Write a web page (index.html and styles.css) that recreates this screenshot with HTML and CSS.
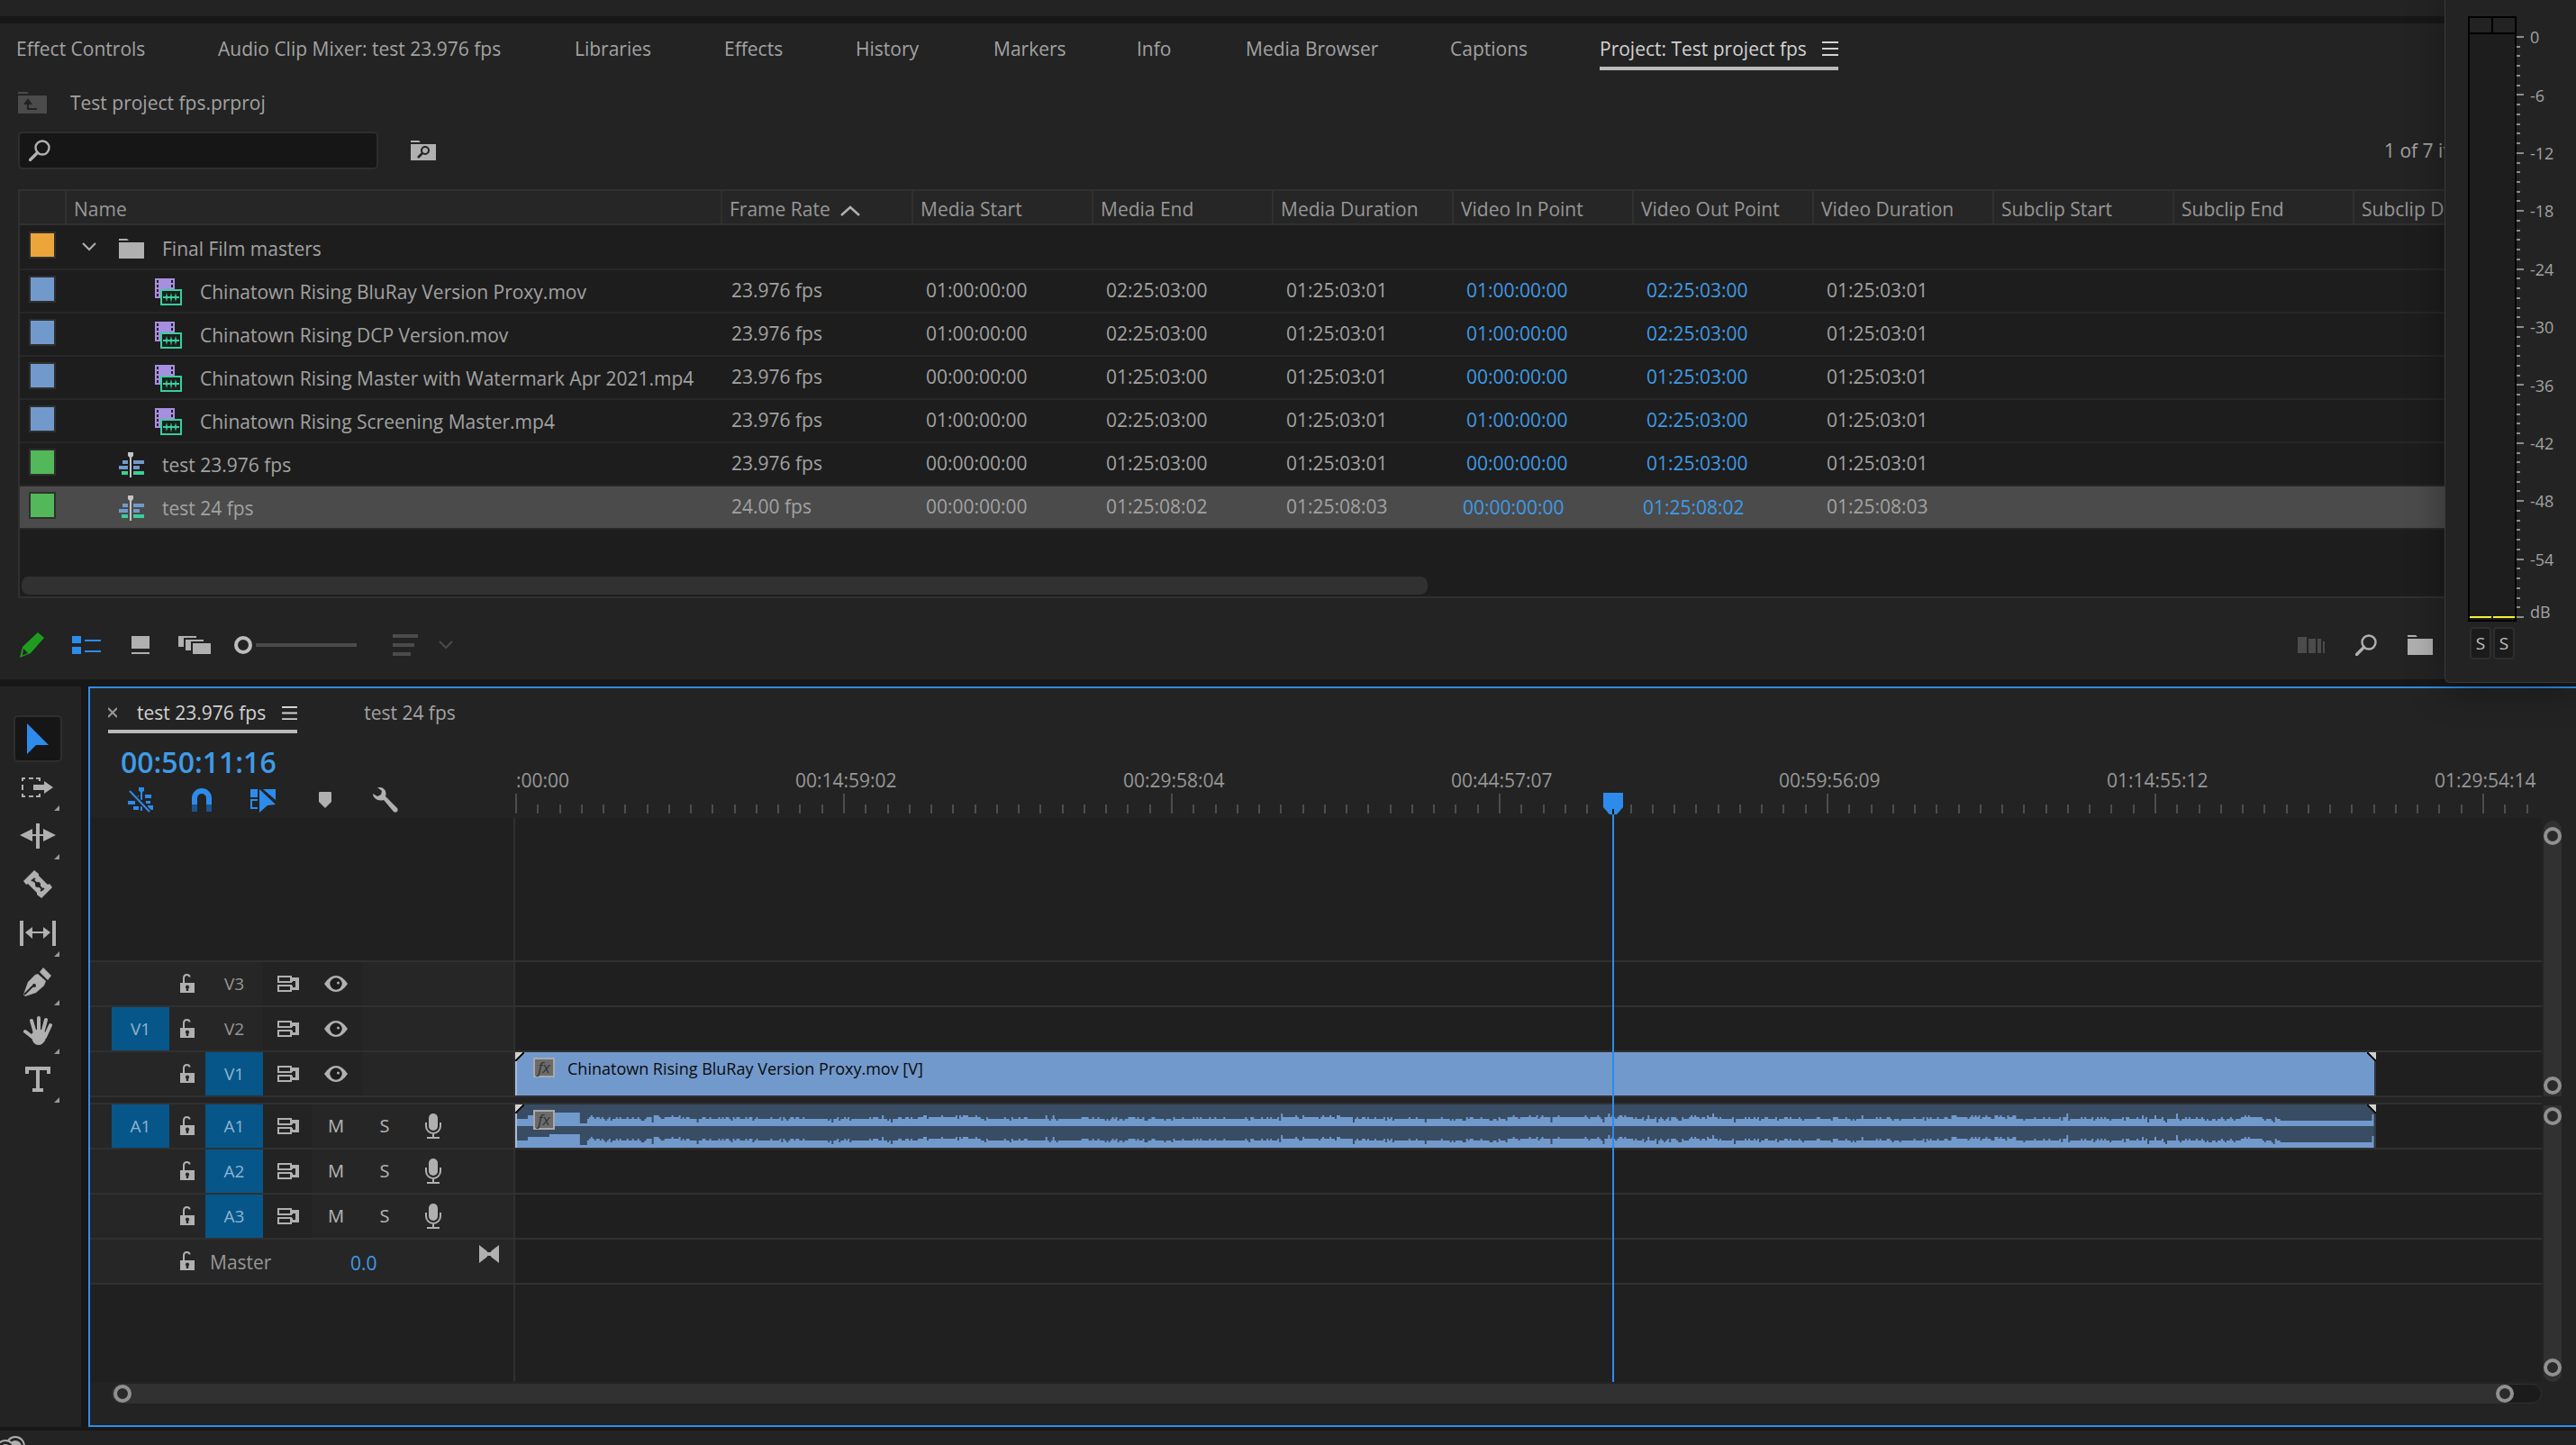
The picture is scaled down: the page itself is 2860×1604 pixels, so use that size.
FILE: index.html
```html
<!DOCTYPE html>
<html lang="en">
<head>
<meta charset="utf-8">
<title>Test project fps</title>
<link rel="stylesheet" href="styles.css">
</head>
<body>
<svg class="sprite" aria-hidden="true">
  <symbol id="i-lock" viewBox="0 0 16 22"><path d="M4 11V5q0-4 3.500-4Q10.500 1 10.500 3.500" fill="none" stroke="currentColor" stroke-width="2"/><path fill="currentColor" fill-rule="evenodd" d="M0 10h16v11H0zM8 12.500a2.200 2.200 0 0 0-1.200 4V19h2.400v-2.500a2.200 2.200 0 0 0-1.200-4z"/></symbol>
  <symbol id="i-sync" viewBox="0 0 24 20"><g fill="none" stroke="currentColor" stroke-width="2"><path d="M1 2h14v6H1zM1 12h14v6H1z"/></g><path fill="currentColor" d="M14 3h10v14H14v-3h6V7h-6zM14 6h3v2h-3zM14 12h3v2h-3z"/></symbol>
  <symbol id="i-eye" viewBox="0 0 26 18"><path fill="currentColor" fill-rule="evenodd" d="M0 9Q6 0 13 0t13 9q-6 9-13 9T0 9zm13-6.500a6.500 6.500 0 1 0 0 13 6.500 6.500 0 0 0 0-13z"/><circle cx="13" cy="9" r="6.500" fill="#1c1c1c"/><circle cx="15.500" cy="8" r="1.500" fill="currentColor"/></symbol>
  <symbol id="i-mic" viewBox="0 0 20 28"><rect x="5" y="0" width="10" height="19" rx="5" fill="currentColor"/><path d="M2 10v4a8 8 0 0 0 16 0v-4M10 22v4M3 27h14" fill="none" stroke="currentColor" stroke-width="2"/></symbol>
  <symbol id="i-folder" viewBox="0 0 28 22"><path fill="currentColor" d="M0 0h9l2 2H0zM0 4h28v18H0z"/></symbol>
  <symbol id="i-clip" viewBox="0 0 30 30"><path fill="#a78fdf" d="M0 0h22v12H6v10H0z"/><path fill="#1d1d1d" d="M2 2h2v3H2zM2 7h2v3H2zM2 12h2v3H2zM2 17h2v3H2zM18 2h2v3h-2zM18 7h2v3h-2z"/><rect x="7" y="13" width="22" height="16" fill="#1d1d1d" stroke="#37cf9a" stroke-width="2"/><path fill="#37cf9a" d="M9 20h3l1-4 1 4h3l1-4 1 4h3l1-4 1 4h3v2h-3l-1 4-1-4h-3l-1 5-1-5h-3l-1 4-1-4H9z"/></symbol>
  <symbol id="i-seq" viewBox="0 0 28 28"><path fill="#7299cc" d="M4 9h6v4H4zM16 9h12v4H16zM0 15h10v4H0zM16 15h7v4h-7z"/><path fill="#37cf9a" d="M3 21h7v4H3zM16 21h12v4H16z"/><path fill="#c4c4c4" d="M10 0h6v4l-2 2v22h-2V6l-2-2z"/></symbol>
  <symbol id="i-search" viewBox="0 0 24 24"><circle cx="15" cy="9" r="7.500" fill="none" stroke="currentColor" stroke-width="2.400"/><path d="M9.500 14.500 1.500 22.500" stroke="currentColor" stroke-width="3.400" stroke-linecap="round"/></symbol>
  <symbol id="i-menu" viewBox="0 0 18 16"><path fill="currentColor" d="M0 0h18v2H0zM0 7h18v2H0zM0 14h18v2H0z"/></symbol>
</svg>

<header class="topbar"></header>

<section class="project">
  <nav class="tabs" aria-label="Panels">
    <a href="#">Effect Controls</a>
    <a href="#">Audio Clip Mixer: test 23.976 fps</a>
    <a href="#">Libraries</a>
    <a href="#">Effects</a>
    <a href="#">History</a>
    <a href="#">Markers</a>
    <a href="#">Info</a>
    <a href="#">Media Browser</a>
    <a href="#">Captions</a>
    <a href="#" class="active">Project: Test project fps <svg width="18" height="16"><use href="#i-menu"/></svg></a>
  </nav>
  <div class="path">
    <svg width="32" height="24" viewBox="0 0 32 24"><path fill="#4b4b4b" d="M0 0h10l2 2H0zM0 4h32v20H0z"/><path d="M11 9v10h10" fill="none" stroke="#232323" stroke-width="2"/><path fill="#232323" d="m11 7 5 7H6z"/></svg>
    <span>Test project fps.prproj</span>
  </div>
  <div class="search-row">
    <label class="search"><svg width="24" height="24"><use href="#i-search"/></svg><input type="text" aria-label="Search project"></label>
    <button class="plain" aria-label="New search bin"><svg width="28" height="22" viewBox="0 0 28 22"><path fill="#b0b0b0" d="M0 0h9l2 2H0zM0 4h28v18H0z"/><circle cx="16" cy="11" r="4" fill="none" stroke="#232323" stroke-width="2"/><path d="m13 14-5 5" stroke="#232323" stroke-width="2.500"/></svg></button>
    <span class="count">1 of 7 items selected</span>
  </div>

  <div class="bin">
    <table>
      <colgroup><col class="c-label"><col class="c-name"><col class="c-rate"><col class="c-std"><col class="c-std"><col class="c-std"><col class="c-std"><col class="c-std"><col class="c-std"><col class="c-std"><col class="c-std"><col></colgroup>
      <thead><tr><th></th><th>Name</th><th>Frame Rate <svg class="sort" width="22" height="12" viewBox="0 0 22 12"><path d="m1 11 10-9 10 9" fill="none" stroke="#b0b0b0" stroke-width="2.500"/></svg></th><th>Media Start</th><th>Media End</th><th>Media Duration</th><th>Video In Point</th><th>Video Out Point</th><th>Video Duration</th><th>Subclip Start</th><th>Subclip End</th><th>Subclip Duration</th></tr></thead>
      <tbody>
        <tr class="bin-row"><td><i class="swatch orange"></i></td><td><div class="name"><svg class="twirl" width="16" height="10" viewBox="0 0 16 10"><path d="m1 1 7 7 7-7" fill="none" stroke="#b0b0b0" stroke-width="2"/></svg><svg width="28" height="22"><use href="#i-folder"/></svg>Final Film masters</div></td><td></td><td></td><td></td><td></td><td></td><td></td><td></td><td></td><td></td><td></td></tr>
        <tr><td><i class="swatch blue"></i></td><td><div class="name clip-name"><svg width="30" height="30"><use href="#i-clip"/></svg>Chinatown Rising BluRay Version Proxy.mov</div></td><td>23.976 fps</td><td>01:00:00:00</td><td>02:25:03:00</td><td>01:25:03:01</td><td class="hot">01:00:00:00</td><td class="hot">02:25:03:00</td><td>01:25:03:01</td><td></td><td></td><td></td></tr>
        <tr><td><i class="swatch blue"></i></td><td><div class="name clip-name"><svg width="30" height="30"><use href="#i-clip"/></svg>Chinatown Rising DCP Version.mov</div></td><td>23.976 fps</td><td>01:00:00:00</td><td>02:25:03:00</td><td>01:25:03:01</td><td class="hot">01:00:00:00</td><td class="hot">02:25:03:00</td><td>01:25:03:01</td><td></td><td></td><td></td></tr>
        <tr><td><i class="swatch blue"></i></td><td><div class="name clip-name"><svg width="30" height="30"><use href="#i-clip"/></svg>Chinatown Rising Master with Watermark Apr 2021.mp4</div></td><td>23.976 fps</td><td>00:00:00:00</td><td>01:25:03:00</td><td>01:25:03:01</td><td class="hot">00:00:00:00</td><td class="hot">01:25:03:00</td><td>01:25:03:01</td><td></td><td></td><td></td></tr>
        <tr><td><i class="swatch blue"></i></td><td><div class="name clip-name"><svg width="30" height="30"><use href="#i-clip"/></svg>Chinatown Rising Screening Master.mp4</div></td><td>23.976 fps</td><td>01:00:00:00</td><td>02:25:03:00</td><td>01:25:03:01</td><td class="hot">01:00:00:00</td><td class="hot">02:25:03:00</td><td>01:25:03:01</td><td></td><td></td><td></td></tr>
        <tr><td><i class="swatch green"></i></td><td><div class="name seq-name"><svg width="28" height="28"><use href="#i-seq"/></svg>test 23.976 fps</div></td><td>23.976 fps</td><td>00:00:00:00</td><td>01:25:03:00</td><td>01:25:03:01</td><td class="hot">00:00:00:00</td><td class="hot">01:25:03:00</td><td>01:25:03:01</td><td></td><td></td><td></td></tr>
        <tr class="selected"><td><i class="swatch green"></i></td><td><div class="name seq-name"><svg width="28" height="28"><use href="#i-seq"/></svg>test 24 fps</div></td><td>24.00 fps</td><td>00:00:00:00</td><td>01:25:08:02</td><td>01:25:08:03</td><td class="hot">00:00:00:00</td><td class="hot">01:25:08:02</td><td>01:25:08:03</td><td></td><td></td><td></td></tr>
      </tbody>
    </table>
    <div class="bin-scroll"></div>
  </div>

  <div class="toolbar">
    <button class="plain t-pen" aria-label="Writable"><svg width="28" height="28" viewBox="0 0 28 28"><path fill="#1f9c1f" d="m20 0 7 6L12 23 0 28l3-12z"/><path fill="#232323" d="m4 18 5 5-6 2.500z"/></svg></button>
    <button class="plain t-list" aria-label="List view"><svg width="32" height="20" viewBox="0 0 32 20"><path fill="#2d8ceb" d="M0 0h10v8H0zM0 12h10v8H0zM14 4h18v2H14zM14 16h18v2H14z"/></svg></button>
    <button class="plain t-icon" aria-label="Icon view"><svg width="20" height="20" viewBox="0 0 20 20"><path fill="#b0b0b0" d="M0 0h20v14H0zM0 18h20v2H0z"/></svg></button>
    <button class="plain t-free" aria-label="Freeform view"><svg width="36" height="20" viewBox="0 0 36 20"><path fill="#b0b0b0" d="M0 0h20v2H6v10H0zM8 4h20v2H14v10H8zM16 8h20v12H16z"/></svg></button>
    <input class="zoom" type="range" min="0" max="100" value="0" aria-label="Thumbnail size">
    <button class="plain" aria-label="Sort"><svg width="68" height="24" viewBox="0 0 68 24"><path fill="#4b4b4b" d="M0 0h28v4H0zM0 10h24v4H0zM0 20h20v4H0z"/><path d="m52 8 7 7 7-7" fill="none" stroke="#4b4b4b" stroke-width="2"/></svg></button>
    <div class="toolbar-right">
      <button class="plain" aria-label="Automate to sequence"><svg width="30" height="18" viewBox="0 0 30 18"><path fill="#4b4b4b" d="M0 0h10v18H0zM12 2h8v16h-8zM22 2h4v16h-4zM28 5h2v13h-2z"/></svg></button>
      <button class="plain" aria-label="Find"><svg width="24" height="24"><use href="#i-search"/></svg></button>
      <button class="plain" aria-label="New bin"><svg width="28" height="22"><use href="#i-folder"/></svg></button>
    </div>
  </div>
</section>

<main class="workspace">
  <aside class="tools">
    <button class="tool on" aria-label="Selection"><svg width="24" height="34" viewBox="0 0 24 34"><path fill="#2d8ceb" d="m0 0 24 24H10L0 34z"/></svg></button>
    <button class="tool more" aria-label="Track select forward"><svg width="36" height="24" viewBox="0 0 36 24"><path d="M1 5V2h3M8 2h5M16 2h4v3M1 9v6M1 19v3h3M8 22h5M16 22h4v-3" fill="none" stroke="currentColor" stroke-width="2"/><path fill="currentColor" d="M13 9h12V5l10 7-10 7v-4H13z"/></svg></button>
    <button class="tool more" aria-label="Ripple edit"><svg width="40" height="30" viewBox="0 0 40 30"><path fill="currentColor" d="M18 1h4v28h-4zM0 14l14-7v6h4v2h-4v6zM40 14l-14-7v6h-4v2h4v6z"/></svg></button>
    <button class="tool" aria-label="Razor"><svg width="32" height="32" viewBox="0 0 32 32"><path fill="currentColor" d="m12 0 5 4v2l10 10 2-1 3 4-12 12-5-4v-2L5 15l-2 1-3-4z"/><path d="m10 10 12 12M9 12l4-3M19 23l4-3" stroke="#232323" stroke-width="2" fill="none"/><circle cx="16" cy="16" r="3" fill="#232323"/></svg></button>
    <button class="tool more" aria-label="Slip"><svg width="40" height="28" viewBox="0 0 40 28"><path fill="currentColor" d="M0 0h4v28H0zM36 0h4v28h-4zM6 13l8-6v5h12V7l8 6-8 7v-6H14v6z"/></svg></button>
    <button class="tool more" aria-label="Pen"><svg width="32" height="32" viewBox="0 0 32 32"><path fill="currentColor" d="m22 0 9 9-4 5-9-9zM16 7l9 8-2 5-9 8-12 4L0 30l5-14 8-8z"/><path d="m1 30 10-10" stroke="#232323" stroke-width="2"/><circle cx="12" cy="20" r="2" fill="#232323"/></svg></button>
    <button class="tool more" aria-label="Hand"><svg width="32" height="32" viewBox="0 0 32 32"><path d="m2 17 9 7M9 5l4 14M17 2v16M25 4l-4 15M30 10l-6 13" stroke="currentColor" stroke-width="4" stroke-linecap="round"/><path fill="currentColor" d="m9 20 4-5h9l4 6-2 6q-3 5-7 5-5 0-7-5z"/></svg></button>
    <button class="tool more" aria-label="Type"><svg width="28" height="28" viewBox="0 0 28 28"><path fill="currentColor" d="M0 0h28v8h-4V4h-8v20h4v4H8v-4h4V4H4v4H0z"/></svg></button>
  </aside>

  <section class="timeline">
    <nav class="seq-tabs" aria-label="Sequences">
      <a href="#" class="active"><svg class="close" width="10" height="12" viewBox="0 0 10 12"><path d="m0 1 10 10M10 1 0 11" stroke="#999" stroke-width="2"/></svg>test 23.976 fps<svg width="17" height="15"><use href="#i-menu"/></svg></a>
      <a href="#">test 24 fps</a>
    </nav>

    <div class="seq-grid">
      <div class="sequence">
        <div class="seq-head">
          <div class="controls">
            <div class="timecode">00:50:11:16</div>
            <div class="icons">
              <button class="plain" aria-label="Nest sequences"><svg width="28" height="28" viewBox="0 0 28 28"><path fill="#2d8ceb" d="M12 0h6v4l-2 1v9h-2V5l-2-1zM19 8h7v4h-7zM8 9h4v3H8zM0 15h8v4H0zM6 21h6v4H6zM20 15h5v3h-5zM22 20h6v5h-6zM14 21h2v5h-2z"/><path d="m2 4 22 23" stroke="#232323" stroke-width="5"/><path d="m2 4 22 23" stroke="#2d8ceb" stroke-width="2"/></svg></button>
              <button class="plain" aria-label="Snap"><svg width="22" height="26" viewBox="0 0 22 26"><path d="M3 18v-7a8 8 0 0 1 16 0v7" fill="none" stroke="#2d8ceb" stroke-width="6"/><path fill="#1b5490" d="M0 18h6v8H0zM16 18h6v8h-6z"/></svg></button>
              <button class="plain" aria-label="Linked selection"><svg width="28" height="28" viewBox="0 0 28 28"><path fill="#2d8ceb" d="M0 2h8v9H0zM10 2l18 17-9 1-9 8zM14 2h14v12z"/><path d="M8 14H1v9h7" fill="none" stroke="#2d8ceb" stroke-width="2"/></svg></button>
              <button class="plain" aria-label="Add marker"><svg width="14" height="18" viewBox="0 0 14 18"><path fill="#b0b0b0" d="M0 1q0-1 1-1h12q1 0 1 1v10l-7 7-7-7z"/></svg></button>
              <button class="plain" aria-label="Timeline settings"><svg width="28" height="28" viewBox="0 0 28 28"><path fill="#b0b0b0" d="M5 0c7-1 11 4 9 10l13 13c2 3-1 6-4 4L12 14C6 16 0 12 0 7l5 3 4-2 1-4z"/></svg></button>
            </div>
          </div>
          <div class="ruler" id="ruler"></div>
        </div>

        <div class="lane-row gap-top"><div class="head"></div><div class="lane"></div></div>

        <div class="lane-row track video first"><div class="head"><span></span><svg width="16" height="22"><use href="#i-lock"/></svg><button class="patch">V3</button><div class="opts"><svg width="24" height="20"><use href="#i-sync"/></svg><svg width="26" height="18"><use href="#i-eye"/></svg></div></div><div class="lane"></div></div>
        <div class="lane-row track video"><div class="head"><button class="patch on">V1</button><svg width="16" height="22"><use href="#i-lock"/></svg><button class="patch">V2</button><div class="opts"><svg width="24" height="20"><use href="#i-sync"/></svg><svg width="26" height="18"><use href="#i-eye"/></svg></div></div><div class="lane"></div></div>
        <div class="lane-row track video"><div class="head"><span></span><svg width="16" height="22"><use href="#i-lock"/></svg><button class="patch on">V1</button><div class="opts"><svg width="24" height="20"><use href="#i-sync"/></svg><svg width="26" height="18"><use href="#i-eye"/></svg></div></div>
          <div class="lane"><div class="clip" style="width:91.8%"><i class="fx">fx</i>Chinatown Rising BluRay Version Proxy.mov [V]</div></div></div>
        <div class="divider"></div>
        <div class="lane-row track audio first"><div class="head"><button class="patch on">A1</button><svg width="16" height="22"><use href="#i-lock"/></svg><button class="patch on">A1</button><div class="opts"><svg width="24" height="20"><use href="#i-sync"/></svg></div><button class="ms">M</button><button class="ms">S</button><svg width="20" height="28"><use href="#i-mic"/></svg></div>
          <div class="lane"><div class="clip sound" style="width:91.8%"><svg class="wave" viewBox="0 0 2066 48" preserveAspectRatio="none"><path id="wave" fill="#7299cc"/></svg><i class="fx">fx</i></div></div></div>
        <div class="lane-row track audio"><div class="head"><span></span><svg width="16" height="22"><use href="#i-lock"/></svg><button class="patch on">A2</button><div class="opts"><svg width="24" height="20"><use href="#i-sync"/></svg></div><button class="ms">M</button><button class="ms">S</button><svg width="20" height="28"><use href="#i-mic"/></svg></div><div class="lane"></div></div>
        <div class="lane-row track audio"><div class="head"><span></span><svg width="16" height="22"><use href="#i-lock"/></svg><button class="patch on">A3</button><div class="opts"><svg width="24" height="20"><use href="#i-sync"/></svg></div><button class="ms">M</button><button class="ms">S</button><svg width="20" height="28"><use href="#i-mic"/></svg></div><div class="lane"></div></div>
        <div class="lane-row track master"><div class="head"><span></span><svg width="16" height="22"><use href="#i-lock"/></svg><span class="master-name">Master</span><span class="master-gain">0.0</span><svg class="bow" width="22" height="20" viewBox="0 0 22 20"><path fill="#b0b0b0" d="m0 0 9 7v6l-9 7zM22 0l-9 7v6l9 7zM9 8h4v4H9z"/></svg></div><div class="lane"></div></div>

        <div class="lane-row gap-bottom"><div class="head"></div><div class="lane"></div></div>

        <div class="time-layer"><div class="playhead" style="left:54.140%"><svg width="22" height="24" viewBox="0 0 22 24"><path fill="#2d8ceb" d="M0 0h22v16l-7 8H7l-7-8z"/><path fill="#111" d="M10 18h2v6h-2z"/></svg></div></div>
      </div>

      <div class="vscrolls">
        <div class="vscroll top"><i class="knob"></i><i class="knob"></i></div>
        <div class="vscroll bottom"><i class="knob"></i><i class="knob"></i></div>
      </div>
    </div>

    <div class="hscroll"><div class="hbar"><i class="knob"></i><i class="knob"></i></div></div>
  </section>
</main>

<footer class="status"><svg width="30" height="10" viewBox="0 0 30 10"><circle cx="17" cy="11" r="10" fill="none" stroke="#b0b0b0" stroke-width="2"/><circle cx="17" cy="12" r="7" fill="#b0b0b0"/><circle cx="6" cy="15" r="10" fill="#232323" stroke="#b0b0b0" stroke-width="2"/><circle cx="6" cy="15" r="6" fill="#b0b0b0"/></svg></footer>

<aside class="meters">
  <div class="meter-col">
    <div class="meter">
      <div class="peaks"><i></i><i></i></div>
      <div class="levels"><i></i><i></i></div>
    </div>
    <div class="solos"><button>S</button><button>S</button></div>
  </div>
  <svg class="meter-ticks" width="8" height="646" id="ticks"></svg>
  <div class="scale">
    <div class="marks"><span>0</span><span>-6</span><span>-12</span><span>-18</span><span>-24</span><span>-30</span><span>-36</span><span>-42</span><span>-48</span><span>-54</span></div>
    <span class="db">dB</span>
  </div>
</aside>

<script src="app.js"></script>
</body>
</html>
```

FILE: styles.css
```css
* { box-sizing: border-box; }

:root {
  --panel: #232323;
  --gap: #171717;
  --line: #303030;
  --text: #a2a2a2;
  --icon: #b0b0b0;
  --blue: #2d8ceb;
  --hot: #3f9be6;
  --clip: #7299cc;
}

body {
  margin: 0;
  min-height: 100vh;
  display: flex;
  flex-direction: column;
  background: var(--gap);
  color: var(--text);
  font: 21px/26px "Open Sans", "Noto Sans", sans-serif;
  overflow: hidden;
  position: relative;
}

a { color: inherit; text-decoration: none; }
svg { display: block; flex: none; }
button { font: inherit; color: inherit; border: 0; padding: 0; background: none; }
.plain { display: flex; }
.sprite { position: absolute; width: 0; height: 0; }

.topbar { height: 18px; background: var(--panel); margin-bottom: 8px; }

/* Project panel */
.project { background: var(--panel); color: var(--text); overflow: hidden; }

.tabs {
  display: grid;
  grid-template-columns: 224px 396px 166px 146px 153px 159px 121px 227px 166px max-content;
  padding: 8px 0 0 18px;
  line-height: 40px;
  white-space: nowrap;
}
.tabs .active {
  display: flex;
  align-items: center;
  gap: 17px;
  color: #d2d2d2;
  border-bottom: 4px solid #bababa;
}

.path {
  display: flex;
  align-items: center;
  gap: 26px;
  height: 68px;
  padding: 4px 0 0 20px;
}

.search-row { display: flex; align-items: center; padding: 0 146px 0 20px; }
.search {
  display: flex;
  align-items: center;
  width: 400px;
  height: 42px;
  margin-right: 36px;
  padding: 0 10px;
  gap: 8px;
  background: #161616;
  border: 2px solid #2e2e2e;
  border-radius: 5px;
  color: var(--icon);
}
.search input {
  flex: 1;
  min-width: 0;
  border: 0;
  outline: 0;
  background: none;
  color: var(--text);
  font: inherit;
}
.count { width: 67px; margin-left: auto; white-space: nowrap; overflow: hidden; }

.bin {
  margin: 22px 0 0 20px;
  border: 2px solid var(--line);
  border-right: 0;
  background: #1d1d1d;
}
.bin table { width: 100%; table-layout: fixed; border-collapse: separate; border-spacing: 0; }
.c-label { width: 50px; }
.c-name { width: 728px; }
.c-rate { width: 212px; }
.c-std { width: 200px; }
.bin th {
  height: 38px;
  padding: 4px 0 0 8px;
  background: #262626;
  border-left: 2px solid var(--line);
  border-bottom: 2px solid var(--line);
  font-weight: 400;
  text-align: left;
  white-space: nowrap;
  color: #979797;
}
.bin th:first-child { border-left: 0; }
.sort { display: inline-block; margin-left: 6px; }
.bin td {
  height: 48px;
  padding: 0 0 2px 16px;
  border-bottom: 2px solid #272727;
  white-space: nowrap;
}
.bin-row td { height: 50px; padding-top: 2px; }
.bin td:first-child { padding: 0 0 4px 10px; }
.bin td:nth-child(2) { padding: 2px 0 0; }
.bin td:nth-child(3) { padding-left: 12px; }
.bin .hot { color: var(--hot); }
.bin .selected td { background: #4b4b4b; }
.bin .selected .hot { padding: 0 0 0 12px; }
.bin .bin-row td:nth-child(2) { padding-top: 4px; }
.swatch { display: block; width: 30px; height: 30px; border: 2px solid #2f2f2f; }
.orange { background: #eca53a; }
.blue { background: var(--clip); }
.green { background: #53b859; }
.name { display: flex; align-items: center; gap: 20px; padding-left: 19px; }
.name svg { color: var(--icon); }
.name .twirl { margin: 0 5px 4px 0; }
.clip-name { padding-left: 100px; }
.seq-name { padding-left: 60px; }
.bin-scroll { width: 55%; height: 20px; margin: 52px 0 2px 2px; border-radius: 8px; background: #313131; }

.toolbar { display: flex; align-items: center; height: 90px; padding: 14px 159px 0 22px; }
.t-pen { margin-right: 30px; }
.t-list { margin-right: 34px; }
.t-icon { margin-right: 32px; }
.t-free { margin-right: 26px; }
.zoom {
  appearance: none;
  width: 136px;
  height: 20px;
  margin: 0 40px 0 0;
  background: linear-gradient(#4b4b4b, #4b4b4b) right center / 112px 4px no-repeat;
}
.zoom::-webkit-slider-thumb {
  appearance: none;
  width: 20px;
  height: 20px;
  border: 4px solid #bdbdbd;
  border-radius: 50%;
  background: var(--panel);
}
.toolbar-right { display: flex; align-items: center; gap: 34px; margin-left: auto; color: var(--icon); }

/* Workspace */
.workspace { flex: 1; display: flex; gap: 8px; padding: 8px 0 4px; }
.tools {
  width: 90px;
  padding: 32px 0 0 15px;
  display: flex;
  flex-direction: column;
  gap: 2px;
  background: var(--panel);
}
.tool {
  display: grid;
  place-items: center;
  width: 54px;
  height: 52px;
  color: var(--icon);
  position: relative;
}
.tool.on { background: #161616; border: 2px solid #2e2e2e; border-radius: 5px; }
.more::after {
  content: "";
  position: absolute;
  right: 3px;
  bottom: 0;
  border: 3px solid transparent;
  border-right-color: #999;
  border-bottom-color: #999;
}

.timeline {
  flex: 1;
  min-width: 0;
  display: flex;
  flex-direction: column;
  background: var(--panel);
  border: 2px solid var(--blue);
  border-right: 0;
}
.seq-tabs { display: flex; gap: 74px; padding: 8px 0 0 20px; line-height: 38px; }
.seq-tabs .active {
  display: flex;
  align-items: center;
  gap: 18px;
  color: #d2d2d2;
  border-bottom: 4px solid #bababa;
}
.seq-tabs .close { margin-right: 4px; }

.seq-grid { flex: 1; display: grid; grid-template-columns: minmax(0, 1fr) 38px; }
.sequence { display: flex; flex-direction: column; position: relative; }
.seq-head, .lane-row { display: grid; grid-template-columns: 470px minmax(0, 1fr); }
.controls { padding: 4px 0 6px 34px; }
.timecode { font-size: 32px; line-height: 56px; font-weight: 600; color: var(--hot); }
.icons { display: grid; grid-template-columns: 71px 65px 76px 60px 28px; align-items: center; height: 28px; padding-left: 8px; }

.ruler { position: relative; margin-left: 2px; }
.ruler span { position: absolute; top: 39px; margin-left: -53px; color: #979797; }
.ruler span:first-of-type { margin-left: 1px; }
.ruler svg { position: absolute; left: 0; bottom: 5px; width: 100%; height: 22px; }

.lane { border-left: 2px solid var(--line); background: #1f1f1f; position: relative; }
.gap-top { flex: 158; background: #202020; }
.gap-bottom { flex: 108; background: #202020; }
.gap-top .lane, .gap-bottom .lane { background: #202020; }
.track { height: 50px; border-bottom: 2px solid var(--line); }
.track.first { height: 52px; border-top: 2px solid var(--line); }
.divider { height: 6px; background: #232323; }

.head {
  display: grid;
  grid-template-columns: 64px 40px 64px 54px 54px 54px 54px;
  padding-left: 24px;
  justify-items: center;
  align-items: center;
  color: var(--icon);
}
.track .head { background: #262626; }
.patch { width: 64px; height: 48px; font-size: 19px; color: #979797; }
.patch.on { background: #06568a; color: #8fb4cf; }
.opts { height: 48px; display: flex; align-items: center; justify-self: start; gap: 28px; padding-left: 16px; background: #232323; }
.video .opts { width: 110px; }
.audio .opts { width: 54px; }
.ms { width: 54px; height: 48px; font-size: 20px; font-family: "Noto Sans", sans-serif; }
.master .head { grid-template-columns: 64px 40px 156px 148px 22px; }
.master-name { justify-self: start; padding: 2px 0 0 5px; color: #979797; }
.master-gain { justify-self: start; padding: 4px 0 0 5px; color: var(--hot); }
.bow { margin-bottom: 16px; }

.clip {
  position: relative;
  height: 48px;
  display: flex;
  align-items: flex-start;
  gap: 14px;
  padding: 6px 0 0 18px;
  font-size: 18px;
  line-height: 24px;
  color: #0a0a0a;
  background: var(--clip);
  border-left: 2px solid #a9bcd6;
  border-right: 2px solid #33383f;
  white-space: nowrap;
}
.clip.sound { background: #384c63; }
.clip::before, .clip::after {
  content: "";
  position: absolute;
  top: 0;
  width: 10px;
  height: 10px;
}
.clip::before { left: -2px; background: linear-gradient(135deg, #d0d0d0 42%, #111 43% 56%, transparent 57%); }
.clip::after { right: -2px; background: linear-gradient(225deg, #d0d0d0 42%, #111 43% 56%, transparent 57%); }
.wave { position: absolute; left: 0; top: 0; width: 100%; height: 48px; }
.fx {
  position: relative;
  width: 24px;
  height: 22px;
  border: 2px solid #a9a9a9;
  background: #6b6b6b;
  color: #333;
  font-size: 17px;
  line-height: 17px;
  text-align: center;
}

.time-layer { position: absolute; left: 472px; right: 0; top: 66px; bottom: 0; pointer-events: none; }
.playhead { position: absolute; top: 0; bottom: 0; width: 2px; background: var(--blue); }
.playhead svg { margin-left: -10px; }

.vscrolls { display: flex; flex-direction: column; gap: 10px; padding: 97px 0 0 2px; }
.vscroll {
  width: 20px;
  display: flex;
  flex-direction: column;
  justify-content: space-between;
  background: #313131;
}
.vscroll.top { flex: 305; padding: 7px 0 2px; border-radius: 10px 10px 0 0; }
.vscroll.bottom { flex: 308; padding: 2px 0 6px; border-radius: 0 0 10px 10px; }
.knob { display: block; width: 20px; height: 20px; border: 4px solid #909090; border-radius: 50%; background: #2a2a2a; }

.hscroll { height: 48px; padding: 2px 38px 0 24px; }
.hbar {
  display: flex;
  align-items: center;
  justify-content: space-between;
  height: 22px;
  padding: 0 30px 0 1px;
  border: 1px solid #313131;
  border-radius: 11px;
  background: linear-gradient(90deg, #313131 calc(100% - 42px), #1b1b1b 0);
}

.status { height: 16px; padding-top: 6px; background: var(--panel); }

/* Audio meters float above the other panels */
.meters {
  position: absolute;
  right: 0;
  top: 0;
  width: 146px;
  height: 758px;
  display: flex;
  align-items: flex-start;
  padding-left: 25px;
  background: var(--panel);
  border-left: 1px solid #3a3a3a;
  border-bottom: 1px solid #3a3a3a;
  border-bottom-left-radius: 6px;
  box-shadow: 0 6px 40px rgba(0, 0, 0, .35);
}
.meter-col { width: 54px; padding-top: 18px; }
.meter { height: 672px; border: 2px solid #000; display: flex; flex-direction: column; background: #1d1d1d; }
.peaks { display: flex; gap: 2px; height: 18px; background: #000; padding-bottom: 2px; }
.peaks i { flex: 1; background: #232323; }
.levels { flex: 1; display: flex; gap: 2px; padding-bottom: 2px; }
.levels i { flex: 1; border-bottom: 2px solid #f5f02c; }
.solos { display: flex; gap: 2px; padding: 6px 2px 0; }
.solos button {
  flex: 1;
  height: 36px;
  background: #1b1b1b;
  border: 2px solid #2e2e2e;
  border-radius: 4px;
  color: #c0c0c0;
  font-size: 19px;
}
.meter-ticks { margin-top: 40px; }
.scale { padding: 9px 0 0 7px; font-size: 18px; color: var(--text); }
.marks { display: grid; grid-template-rows: repeat(10, 1fr); align-items: center; height: 644px; }
.db { line-height: 52px; }
```

FILE: app.js
```js
const NS = 'http://www.w3.org/2000/svg';

// Ruler: one major tick every STEP percent, fifteen divisions in each
const STEP = 16.178;
const labels = [':00:00', '00:14:59:02', '00:29:58:04', '00:44:57:07', '00:59:56:09', '01:14:55:12', '01:29:54:14'];
const ruler = document.getElementById('ruler');
const rulerSvg = document.createElementNS(NS, 'svg');
for (let i = 0; i < 93; i++) {
  const r = document.createElementNS(NS, 'rect');
  const major = i % 15 === 0;
  r.setAttribute('x', (i * STEP / 15) + '%');
  r.setAttribute('y', major ? 0 : 12);
  r.setAttribute('width', 2);
  r.setAttribute('height', major ? 22 : 10);
  r.setAttribute('fill', '#4d4d4d');
  r.setAttribute('shape-rendering', 'crispEdges');
  rulerSvg.appendChild(r);
}
ruler.appendChild(rulerSvg);
labels.forEach((t, i) => {
  const s = document.createElement('span');
  s.textContent = t;
  s.style.left = (i * STEP) + '%';
  ruler.appendChild(s);
});

// Level meter ticks
const ticks = document.getElementById('ticks');
for (let i = 0; i <= 60; i++) {
  const r = document.createElementNS(NS, 'rect');
  r.setAttribute('y', Math.round(i * 644 / 60));
  r.setAttribute('width', i % 6 ? 4 : 8);
  r.setAttribute('height', 2);
  r.setAttribute('fill', '#8c8c8c');
  ticks.appendChild(r);
}

// Waveform: both channels share the same envelope
let seed = 7;
const rnd = () => (seed = (seed * 16807) % 2147483647) / 2147483647;
const level = x => {
  if (x < 12) return 8;
  if (x < 36) return 12;
  if (x < 70) return 15;
  if (x < 78) return 3;
  if (x > 1960) return x > 2062 ? 13 : 6;
  const swell = 1.5 * Math.sin(x / 61) + Math.sin(x / 23);
  let h = 8 + Math.max(0, swell) + (rnd() > 0.75 ? 2 : 0) - (rnd() > 0.85 ? 2 : 0);
  if (x > 1105 && x < 1165) h += 2;
  if (rnd() > 0.985) h = 3;
  if (rnd() > 0.985) h += 4;
  return Math.round(h / 2) * 2;
};
let d = '';
for (let x = 0; x < 2066; x += 2) {
  const h = level(x);
  d += `M${x} ${24 - h}h2v${h}h-2zM${x} ${48 - h}h2v${h}h-2z`;
}
document.getElementById('wave').setAttribute('d', d);
```
